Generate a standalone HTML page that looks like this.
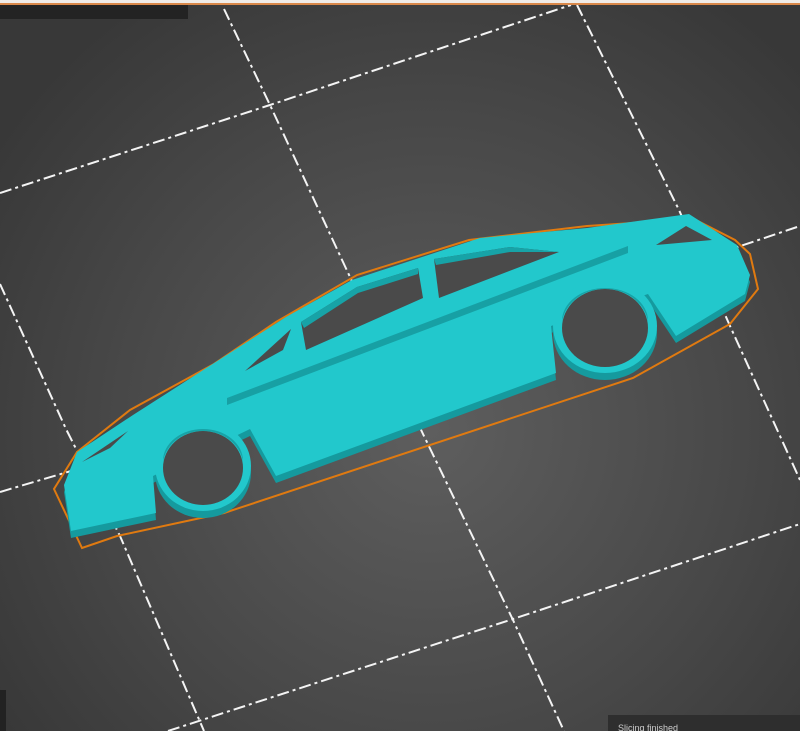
<!DOCTYPE html>
<html><head><style>
html,body{margin:0;padding:0;width:800px;height:731px;overflow:hidden;background:#444}
</style></head><body>
<svg width="800" height="731" viewBox="0 0 800 731" xmlns="http://www.w3.org/2000/svg" style="display:block">
<defs>
<radialGradient id="bg" cx="430" cy="430" r="520" gradientUnits="userSpaceOnUse">
<stop offset="0" stop-color="#5e5e5e"/>
<stop offset="0.6" stop-color="#484848"/>
<stop offset="1" stop-color="#383838"/>
</radialGradient>
</defs>
<rect width="800" height="731" fill="url(#bg)"/>
<g stroke="#f4f4f4" stroke-width="2" fill="none" stroke-dasharray="12 4 3 4">
<polyline points="224,9 270,105 423,434 513,620 564,731"/>
<polyline points="577,5 679,210 730,326 800,480"/>
<polyline points="0,284 66,429 120,536 204,731"/>
<polyline points="0,193 270,105 571,5"/>
<polyline points="0,492 71,471 800,226"/>
<polyline points="168,731 510,620 800,524"/>
</g>
<polygon points="54,489 82,548 117,536 224,513 633,378 730,324 758,289 750,254 735,240 694,219 587,226 469,240 357,275 276,322 214,364 130,410 77,452" fill="none" stroke="#e07a10" stroke-width="2"/>
<g transform="translate(0,7)" fill="#159a9e">
<path d="M71,531 L156,513 L153,476 L250,429 L276,476 L556,373 L551,326 L648,294 L676,336 L745,294 L750,275 L737,245 L689,214 L587,228 L480,238 L352,280 L286,317 L133,415 L77,452 L64,485 Z"/>
<ellipse cx="203" cy="466" rx="48" ry="45"/>
<ellipse cx="605" cy="326" rx="52" ry="47"/>
</g>
<path d="M71,531 L156,513 L153,476 L250,429 L276,476 L556,373 L551,326 L648,294 L676,336 L745,294 L750,275 L737,245 L689,214 L587,228 L480,238 L352,280 L286,317 L133,415 L77,452 L64,485 Z" fill="#22c8cc"/>
<ellipse cx="203" cy="466" rx="48" ry="45" fill="#22c8cc"/>
<ellipse cx="605" cy="326" rx="52" ry="47" fill="#22c8cc"/>
<g fill="#4a4a4a">
<ellipse cx="203" cy="468" rx="40" ry="37"/>
<ellipse cx="605" cy="328" rx="43" ry="39"/>
<polygon points="301,322 357,287 418,268 423,298 306,350"/>
<polygon points="434,259 510,247 559,252 439,298"/>
<polygon points="245,371 291,329 283,350"/>
<polygon points="82,462 128,431 110,448"/>
<polygon points="656,245 686,226 712,240"/>
</g>
<g fill="#17a3a7">
<path d="M203,431 a40,37 0 0 1 40,30 a40,32 0 0 0 -80,0 a40,37 0 0 1 40,-30z"/>
<path d="M605,289 a43,39 0 0 1 43,32 a43,33 0 0 0 -86,0 a43,39 0 0 1 43,-32z"/>
<polygon points="301,322 357,287 418,268 418,274 358,293 304,328"/>
<polygon points="434,259 510,247 559,252 510,252 436,265"/>
</g>
<polygon points="227,398 628,246 628,253 227,405" fill="#17a0a4"/>
<rect x="0" y="0" width="800" height="4" fill="#f0ece8"/>
<rect x="0" y="3" width="800" height="2" fill="#d9884a"/>
<rect x="0" y="5" width="188" height="14" fill="#232323"/>
<rect x="608" y="715" width="192" height="16" fill="#2e2e2e"/>
<rect x="0" y="690" width="6" height="41" fill="#222"/>
<text x="618" y="731" font-family="Liberation Sans, sans-serif" font-size="9" fill="#ccc">Slicing finished</text>
</svg>
</body></html>
